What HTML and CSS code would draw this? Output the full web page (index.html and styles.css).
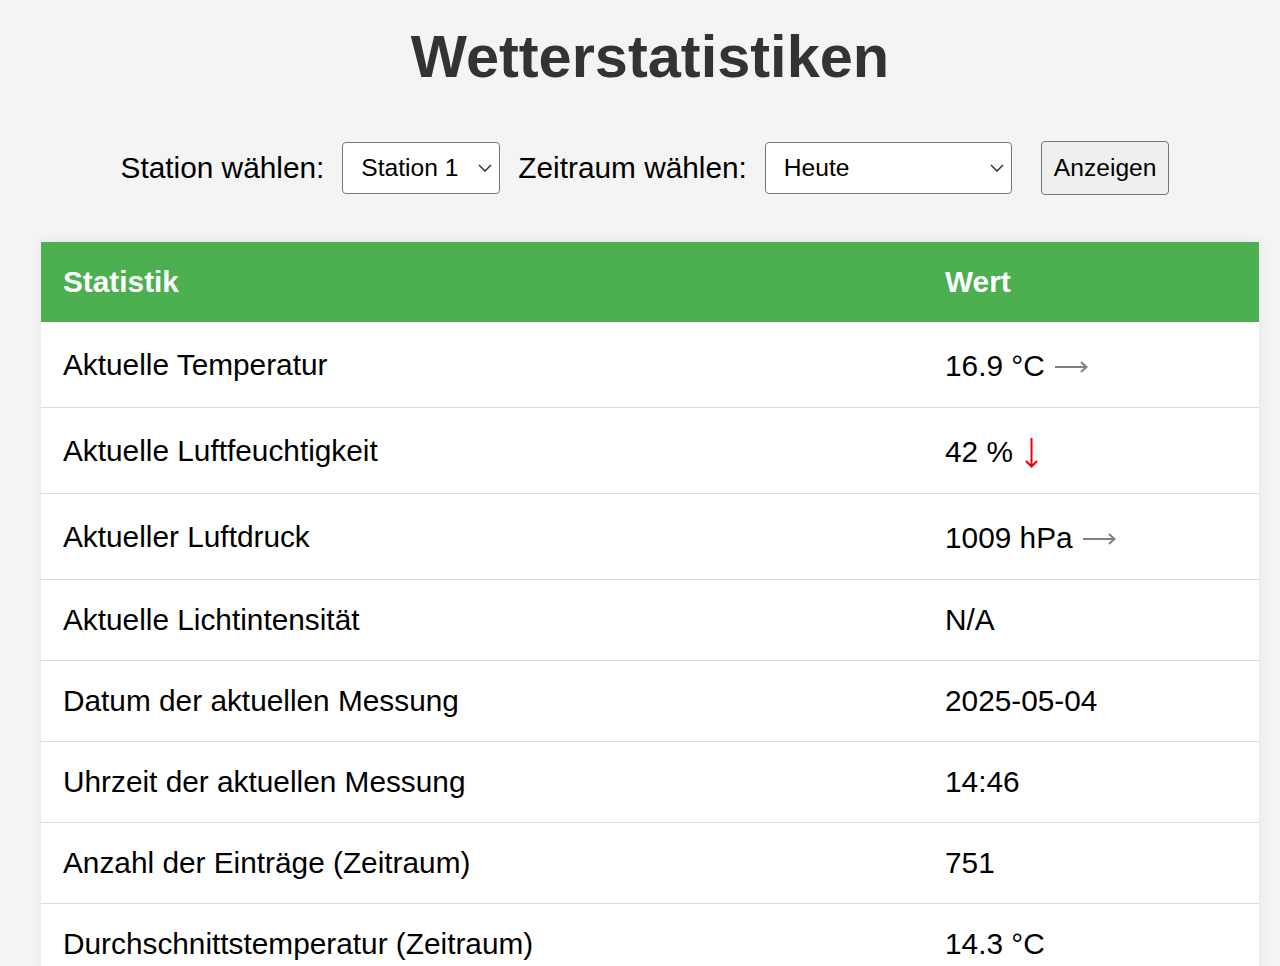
FILE: index.html
```html
<!DOCTYPE html>
<html lang="de">
<head>
    <meta charset="UTF-8">
    <title>Wetterstatistiken</title>
    <link rel="stylesheet" href="styles.css">
</head>
<body>

<h1>Wetterstatistiken</h1>

<!-- Auswahl -->
<form class="controls" onsubmit="return false">
    <label for="station">Station wählen:</label>
    <span class="select-wrap station">
        <select id="station">
            <option>Station 1</option>
            <option>Station 2</option>
        </select>
        <svg class="chevron" viewBox="0 0 14 8"><path d="M1 1 L7 7 L13 1" fill="none" stroke="#222" stroke-width="1.3"/></svg>
    </span>
    <label for="range">Zeitraum wählen:</label>
    <span class="select-wrap range">
        <select id="range">
            <option>Heute</option>
            <option>Letzte 7 Tage</option>
            <option>Letzte 30 Tage</option>
        </select>
        <svg class="chevron" viewBox="0 0 14 8"><path d="M1 1 L7 7 L13 1" fill="none" stroke="#222" stroke-width="1.3"/></svg>
    </span>
    <button class="btn" type="submit">Anzeigen</button>
</form>

<!-- Tabelle -->
<table class="stats">
    <colgroup><col class="col-stat"><col></colgroup>
    <thead>
        <tr><th>Statistik</th><th>Wert</th></tr>
    </thead>
    <tbody>
        <tr><td>Aktuelle Temperatur</td><td>16.9 °C <span class="trend same" title="gleich"><svg class="arrow-right" viewBox="0 0 33 12"><path d="M0 6 H31.5 M26 1 L31.5 6 L26 11" fill="none" stroke="currentColor" stroke-width="2"/></svg></span></td></tr>
        <tr><td>Aktuelle Luftfeuchtigkeit</td><td>42 % <span class="trend down" title="fallend"><svg class="arrow-down" viewBox="0 0 13 30"><path d="M6.5 0 V28.5 M1 23 L6.5 28.5 L12 23" fill="none" stroke="currentColor" stroke-width="2"/></svg></span></td></tr>
        <tr><td>Aktueller Luftdruck</td><td>1009 hPa <span class="trend same" title="gleich"><svg class="arrow-right" viewBox="0 0 33 12"><path d="M0 6 H31.5 M26 1 L31.5 6 L26 11" fill="none" stroke="currentColor" stroke-width="2"/></svg></span></td></tr>
        <tr><td>Aktuelle Lichtintensität</td><td>N/A</td></tr>
        <tr><td>Datum der aktuellen Messung</td><td>2025-05-04</td></tr>
        <tr><td>Uhrzeit der aktuellen Messung</td><td>14:46</td></tr>
        <tr><td>Anzahl der Einträge (Zeitraum)</td><td>751</td></tr>
        <tr><td>Durchschnittstemperatur (Zeitraum)</td><td>14.3 °C</td></tr>
        <tr><td>Minimale Temperatur (Zeitraum)</td><td>9.8 °C</td></tr>
        <tr><td>Maximale Temperatur (Zeitraum)</td><td>18.2 °C</td></tr>
    </tbody>
</table>

</body>
</html>
```

FILE: styles.css
```css
body {
    font-family: 'Liberation Sans', Arial, Helvetica, sans-serif;
    background-color: #f4f4f4;
    color: #000;
    margin: 0;
    padding: 23px 21px 0 41px;
}

h1 {
    font-size: 59.5px;
    line-height: 68px;
    color: #333;
    text-align: center;
    margin: 0 0 50px;
}

/* Auswahlzeile */
.controls {
    display: flex;
    justify-content: center;
    align-items: center;
    height: 53px;
    padding-right: 10px;
    margin: 0 0 48px;
}

.controls label {
    font-size: 29.8px;
    margin-right: 18px;
}

.select-wrap {
    position: relative;
    display: inline-block;
    margin-right: 18px;
}

.select-wrap.range {
    margin-right: 29px;
}

select {
    appearance: none;
    -webkit-appearance: none;
    font-family: inherit;
    font-size: 24.6px;
    color: #000;
    background: white;
    border: 1px solid #767676;
    border-radius: 4px;
    height: 52px;
    padding: 0 40px 0 18px;
    display: block;
}

.station select {
    width: 158px;
}

.range select {
    width: 247px;
}

.chevron {
    position: absolute;
    right: 8px;
    top: 22px;
    width: 14px;
    height: 8px;
    pointer-events: none;
}

.btn {
    font-family: inherit;
    font-size: 24.6px;
    color: #000;
    background: #efefef;
    border: 1px solid #767676;
    border-radius: 4px;
    height: 54px;
    padding: 0 12px;
    cursor: pointer;
}

.btn:hover {
    background: #e5e5e5;
}

/* Tabelle */
.stats {
    width: 100%;
    table-layout: fixed;
    border-collapse: collapse;
    background: white;
    box-shadow: 0 0 10px rgba(0, 0, 0, 0.08);
}

.col-stat {
    width: 882px;
}

.stats th, .stats td {
    font-size: 29.8px;
    line-height: 34px;
    padding: 23px 22px;
    text-align: left;
    border-bottom: 1px solid #ddd;
}

.stats th {
    background: #4caf50;
    color: white;
    line-height: 35px;
    padding: 22px 22px;
    border-bottom: 1px solid #4caf50;
}

/* Trendpfeile */
.trend {
    font-size: 34px;
    line-height: normal;
}

.trend svg {
    display: inline;
}

.trend.same {
    color: #808080;
}

.trend.down {
    color: #e00;
}

.arrow-right {
    width: 33px;
    height: 12px;
    vertical-align: 3px;
    margin-left: 2px;
}

.arrow-down {
    width: 13px;
    height: 30px;
    vertical-align: -6px;
    margin-left: 4px;
}
```
